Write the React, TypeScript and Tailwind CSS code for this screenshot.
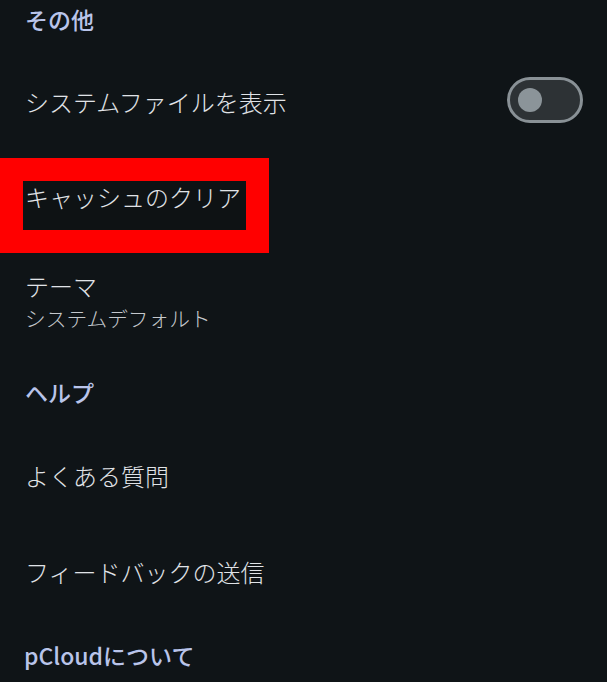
import React from 'react';

const font = { fontFamily: '"Noto Sans CJK JP", "Noto Sans", sans-serif' };

export default function App() {
  return (
    <div className="w-[607px] h-[682px] overflow-hidden bg-[#0f1417] text-[#e0e3e7]" style={font}>
      <div className="flex flex-col">
        {/* その他 */}
        <div className="mt-[3px] pl-[25px] text-[23px] leading-[32px] font-medium text-[#b9c4ea]">その他</div>

        {/* system files */}
        <div className="mt-[42px] h-[46px] pl-[25px] pr-[24px] flex items-center justify-between">
          <span className="text-[24px] leading-[32px] mt-[4px] font-light">システムファイルを表示</span>
          <div className="w-[76px] h-[46px] rounded-full border-[3px] border-[#899196] bg-[#2d3235] flex items-center pl-[8px]">
            <div className="w-[24px] h-[24px] rounded-full bg-[#8b9499]" />
          </div>
        </div>

        {/* clear cache, highlighted */}
        <div className="mt-[35px] w-[269px] h-[95px] border-[23px] border-[#ff0000] bg-[#0e1214]">
          <div className="text-[24px] leading-[32px] pl-[2px] font-light">キャッシュのクリア</div>
        </div>

        {/* theme */}
        <div className="mt-[17px] pl-[25px] font-light">
          <div className="text-[24px] leading-[32px]">テーマ</div>
          <div className="mt-[2px] text-[20.7px] leading-[28px] text-[#c4c8cc]">システムデフォルト</div>
        </div>

        {/* ヘルプ */}
        <div className="mt-[44px] pl-[25px] text-[23px] leading-[32px] font-medium text-[#b9c4ea]">ヘルプ</div>

        <div className="mt-[52px] pl-[25px] text-[24px] leading-[32px] font-light">よくある質問</div>

        <div className="mt-[64px] pl-[25px] text-[24px] leading-[32px] font-light">フィードバックの送信</div>

        <div className="mt-[51px] pl-[24px] text-[23px] leading-[32px] font-medium text-[#b9c4ea]">pCloudについて</div>
      </div>
    </div>
  );
}
